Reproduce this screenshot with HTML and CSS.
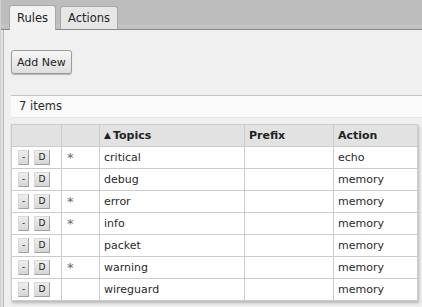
FILE: index.html
```html
<!DOCTYPE html>
<html lang="en">
<head>
    <meta charset="UTF-8">
    <title>Logging Rules</title>
    <link rel="stylesheet" href="styles.css">
</head>
<body>
    <div class="page">
        <div class="tabbar">
            <div class="tab active">Rules</div>
            <div class="tab">Actions</div>
        </div>

        <div class="content">
            <div class="toolbar">
                <button class="add-btn">Add New</button>
            </div>

            <div class="items-bar">7 items</div>

            <table class="rules-table">
                <colgroup>
                    <col class="c-btns">
                    <col class="c-flag">
                    <col class="c-topics">
                    <col class="c-prefix">
                    <col class="c-action">
                </colgroup>
                <thead>
                    <tr>
                        <th></th>
                        <th></th>
                        <th><span class="sort">&#9650;</span>Topics</th>
                        <th>Prefix</th>
                        <th>Action</th>
                    </tr>
                </thead>
                <tbody>
                    <tr>
                        <td class="btns"><span class="mini">-</span><span class="mini wide">D</span></td>
                        <td class="flag">*</td>
                        <td>critical</td>
                        <td></td>
                        <td>echo</td>
                    </tr>
                    <tr>
                        <td class="btns"><span class="mini">-</span><span class="mini wide">D</span></td>
                        <td class="flag"></td>
                        <td>debug</td>
                        <td></td>
                        <td>memory</td>
                    </tr>
                    <tr>
                        <td class="btns"><span class="mini">-</span><span class="mini wide">D</span></td>
                        <td class="flag">*</td>
                        <td>error</td>
                        <td></td>
                        <td>memory</td>
                    </tr>
                    <tr>
                        <td class="btns"><span class="mini">-</span><span class="mini wide">D</span></td>
                        <td class="flag">*</td>
                        <td>info</td>
                        <td></td>
                        <td>memory</td>
                    </tr>
                    <tr>
                        <td class="btns"><span class="mini">-</span><span class="mini wide">D</span></td>
                        <td class="flag"></td>
                        <td>packet</td>
                        <td></td>
                        <td>memory</td>
                    </tr>
                    <tr>
                        <td class="btns"><span class="mini">-</span><span class="mini wide">D</span></td>
                        <td class="flag">*</td>
                        <td>warning</td>
                        <td></td>
                        <td>memory</td>
                    </tr>
                    <tr>
                        <td class="btns"><span class="mini">-</span><span class="mini wide">D</span></td>
                        <td class="flag"></td>
                        <td>wireguard</td>
                        <td></td>
                        <td>memory</td>
                    </tr>
                </tbody>
            </table>
        </div>
    </div>
</body>
</html>
```

FILE: styles.css
```css
body {
    margin: 0;
    background: #f0f0f0;
    font-family: "DejaVu Sans", Verdana, sans-serif;
    font-size: 11px;
    color: #2a2a2a;
    overflow: hidden;
}

.page {
    height: 307px;
    border-left: 1px solid #d0d0d0;
    box-shadow: inset 2px 0 0 #e4e4e4, inset 3px 0 0 #b8b8b8;
}

/* ===== TABS ===== */
.tabbar {
    height: 29px;
    display: flex;
    align-items: flex-end;
    gap: 4px;
    padding-left: 8px;
    background: linear-gradient(to bottom, #bdbdbd 0%, #bdbdbd 82%, #c6c6c6 88%, #bdbdbd 100%);
    border-bottom: 1px solid #8a8a8a;
}

.tab {
    height: 22px;
    line-height: 22px;
    padding: 0 7px;
    font-size: 11.5px;
    color: #222;
    background: #e6e6e6;
    border: 1px solid #a8a8a8;
    border-bottom: none;
    border-radius: 3px 3px 0 0;
}

.tab.active {
    height: 24px;
    line-height: 25px;
    background: #f2f2f2;
    margin-bottom: -1px;
}

/* ===== CONTENT ===== */
.content {
    padding: 20px 0 0 10px;
}

.toolbar {
    height: 24px;
}

.add-btn {
    height: 24px;
    padding: 0 5px;
    font-family: inherit;
    font-size: 11px;
    color: #222;
    background: linear-gradient(to bottom, #f7f7f7, #dedede);
    border: 1px solid #9a9a9a;
    border-radius: 3px;
    box-shadow: 0 1px 1px rgba(0, 0, 0, 0.25);
}

.items-bar {
    margin-top: 21px;
    height: 21px;
    line-height: 21px;
    padding-left: 8px;
    background: #fafafa;
    border-top: 1px solid #c4c4c4;
    border-bottom: 1px solid #e8e8e8;
    font-size: 11.5px;
}

/* ===== TABLE ===== */
.rules-table {
    margin-top: 6px;
    width: 406px;
    table-layout: fixed;
    border-collapse: collapse;
    background: #fff;
    box-shadow: 1px 2px 3px rgba(0, 0, 0, 0.25);
}

.c-btns { width: 50px; }
.c-flag { width: 38px; }
.c-topics { width: 145px; }
.c-prefix { width: 89px; }
.c-action { width: 84px; }

.rules-table th,
.rules-table td {
    height: 21px;
    padding: 0 0 0 4px;
    border: 1px solid #cccccc;
    text-align: left;
    white-space: nowrap;
}

.rules-table th {
    height: 21px;
    background: #e2e2e2;
    font-weight: bold;
    color: #222;
}

.sort {
    font-size: 9px;
    margin-right: 2px;
    vertical-align: 1px;
}

.rules-table td.flag {
    padding-left: 5px;
    font-size: 13px;
    color: #666;
}

.rules-table td.btns {
    padding-left: 6px;
}

.mini {
    display: inline-block;
    width: 9px;
    height: 13px;
    line-height: 13px;
    text-align: center;
    font-size: 9px;
    color: #222;
    background: linear-gradient(to bottom, #eeeeee, #d6d6d6);
    border: 1px solid #a0a0a0;
    border-top-color: #d8d8d8;
    border-left-color: #d8d8d8;
    vertical-align: middle;
}

.mini.wide {
    width: 14px;
    margin-left: 5px;
}
```
